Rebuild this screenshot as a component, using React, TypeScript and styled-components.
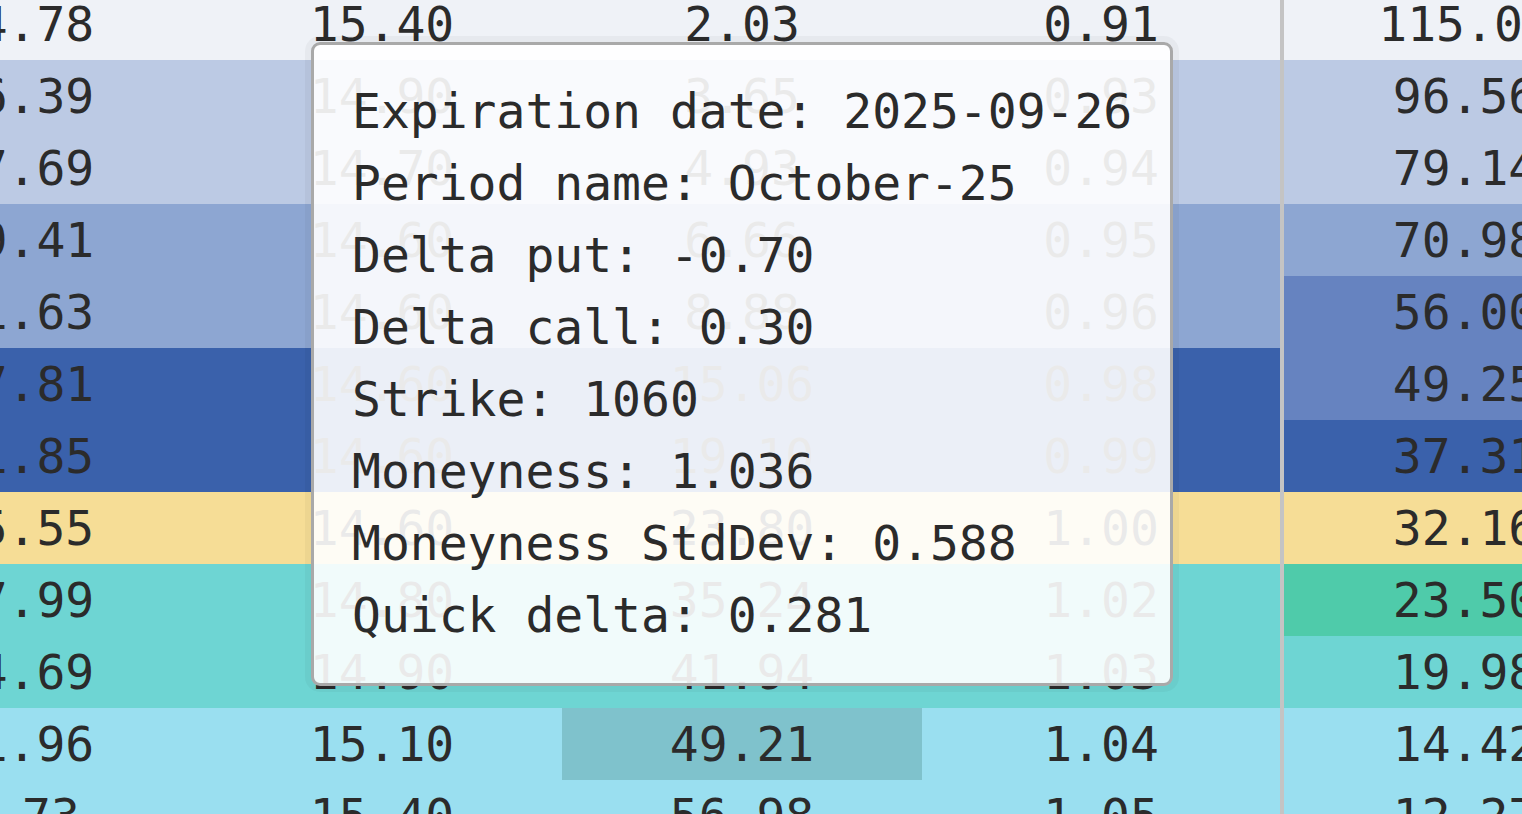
import React from "react";
import styled, { createGlobalStyle } from "styled-components";

const GlobalStyle = createGlobalStyle`
  html, body {
    margin: 0;
    padding: 0;
    background: #eff2f7;
    overflow: hidden;
  }
`;

const C = {
  base: "#eff2f7",
  blue1: "#bccae4",
  blue2: "#8da6d2",
  blue3: "#6683c0",
  blue4: "#3a61ab",
  yellow: "#f6dd96",
  teal: "#6ed5d3",
  green: "#4fcbaa",
  cyan: "#9adff0",
  hilite: "#7fc2cc",
};

type Row = {
  values: [string, string, string, string, string];
  bg: string;
  lastBg: string;
  hiliteCol?: number;
};

const rows: Row[] = [
  { values: ["84.78", "15.40", "2.03", "0.91", "115.04"], bg: C.base, lastBg: C.base },
  { values: ["76.39", "14.90", "3.65", "0.93", "96.56"], bg: C.blue1, lastBg: C.blue1 },
  { values: ["67.69", "14.70", "4.93", "0.94", "79.14"], bg: C.blue1, lastBg: C.blue1 },
  { values: ["59.41", "14.60", "6.66", "0.95", "70.98"], bg: C.blue2, lastBg: C.blue2 },
  { values: ["51.63", "14.60", "8.88", "0.96", "56.00"], bg: C.blue2, lastBg: C.blue3 },
  { values: ["47.81", "14.60", "15.06", "0.98", "49.25"], bg: C.blue4, lastBg: C.blue3 },
  { values: ["41.85", "14.60", "19.10", "0.99", "37.31"], bg: C.blue4, lastBg: C.blue4 },
  { values: ["35.55", "14.60", "23.80", "1.00", "32.16"], bg: C.yellow, lastBg: C.yellow },
  { values: ["27.99", "14.80", "35.24", "1.02", "23.50"], bg: C.teal, lastBg: C.green },
  { values: ["24.69", "14.90", "41.94", "1.03", "19.98"], bg: C.teal, lastBg: C.teal },
  { values: ["21.96", "15.10", "49.21", "1.04", "14.42"], bg: C.cyan, lastBg: C.cyan, hiliteCol: 2 },
  { values: ["8.73", "15.40", "56.98", "1.05", "12.27"], bg: C.cyan, lastBg: C.cyan },
];

const tooltipLines = [
  "Expiration date: 2025-09-26",
  "Period name: October-25",
  "Delta put: -0.70",
  "Delta call: 0.30",
  "Strike: 1060",
  "Moneyness: 1.036",
  "Moneyness StdDev: 0.588",
  "Quick delta: 0.281",
];

const Viewport = styled.div`
  position: relative;
  width: 1522px;
  height: 814px;
  overflow: hidden;
  background: ${C.base};
  font-family: "DejaVu Sans Mono", "Liberation Mono", monospace;
  font-size: 48px;
  color: #2b2b2b;
`;

const Grid = styled.div`
  display: grid;
  grid-template-columns: 360px 360px 360px 358px 366px;
  grid-auto-rows: 72px;
  margin-left: -158px;
  margin-top: -12px;
  width: max-content;
`;

const Cell = styled.div<{ $bg: string; $divider?: boolean }>`
  background: ${(p) => p.$bg};
  line-height: 72px;
  text-align: center;
  white-space: nowrap;
  border-left: ${(p) => (p.$divider ? "4px solid #c4c4c4" : "none")};
`;

const Tooltip = styled.div`
  position: absolute;
  left: 311px;
  top: 42px;
  padding: 30px 38px 32px 38px;
  border: 3px solid #a9a9a9;
  border-radius: 9px;
  background: rgba(255, 255, 255, 0.9);
  box-shadow: 0 0 0 6px rgba(0, 0, 0, 0.035);
  color: #2b2b2b;
`;

const TipLine = styled.div`
  line-height: 72px;
  white-space: pre;
`;

export default function App() {
  return (
    <>
      <GlobalStyle />
      <Viewport>
        <Grid>
          {rows.map((r, ri) =>
            r.values.map((v, ci) => (
              <Cell
                key={`${ri}-${ci}`}
                $bg={ci === 4 ? r.lastBg : r.hiliteCol === ci ? C.hilite : r.bg}
                $divider={ci === 4}
              >
                {v}
              </Cell>
            ))
          )}
        </Grid>
        <Tooltip>
          {tooltipLines.map((l) => (
            <TipLine key={l}>{l}</TipLine>
          ))}
        </Tooltip>
      </Viewport>
    </>
  );
}
